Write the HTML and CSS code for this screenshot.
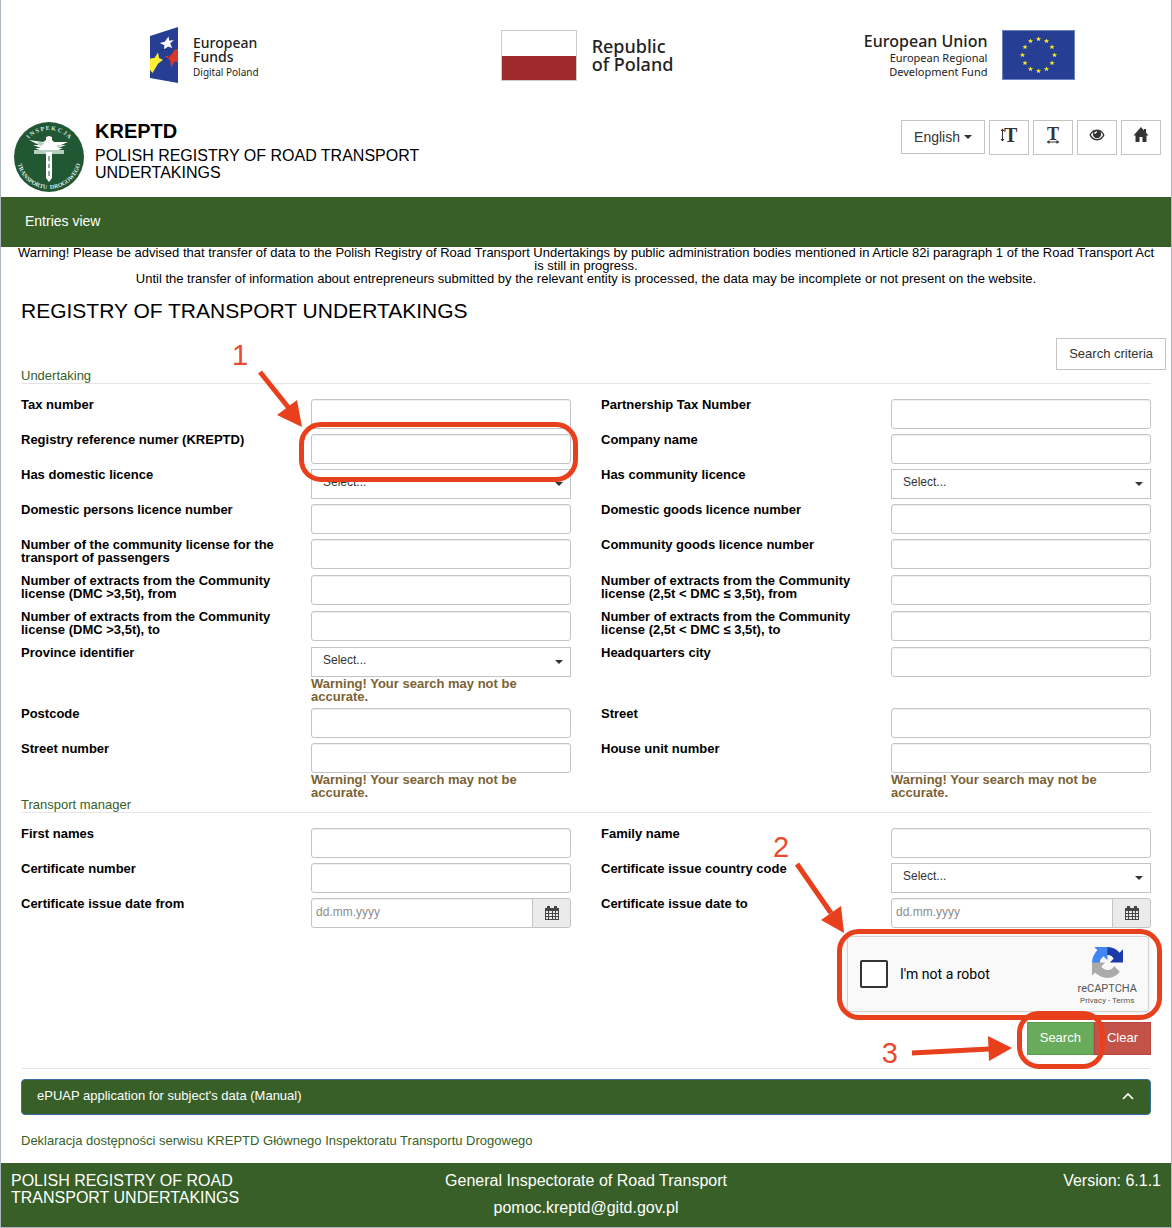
FILE: index.html
```html
<!DOCTYPE html>
<html lang="en">
<head>
<meta charset="utf-8">
<meta name="viewport" content="width=device-width, initial-scale=1">
<title>KREPTD</title>
<link rel="stylesheet" href="styles.css">
</head>
<body>
<div class="page">
  <div class="funding">
    <div class="fund">
      <svg width="28" height="56" viewBox="0 0 28 56" aria-hidden="true">
        <path fill="#263f95" d="M0 9 28 0V56L0 51Z"/>
        <path fill="#fff" d="M18.500 9.500l.8 4.200 4.500-.6-3.600 3.300 2 4.500-4.200-1.400-4 3.300.4-4.600-4.600-2.200 5-1.200z"/>
        <path fill="#fff033" d="M0 31.500l4.500-.5L8 25.500 9 31l4 1.700-5 4L2.500 46 0 43z"/>
        <path fill="#dc3729" d="M28 22v13l-3.500-.5L21.300 40.500 20 33l-5-3.500 6-1.500 4-5.500z"/>
        <path fill="none" stroke="#1c2f7a" d="M8 26c3-4 9-5 12-2M13 33c3 0 6-2 7-5"/>
      </svg>
      <div class="fund-text fund-low"><strong class="fund-md">European<br>Funds</strong><span class="fund-xs">Digital Poland</span></div>
    </div>
    <div class="fund">
      <div class="flag-pl"></div>
      <div class="fund-text"><strong class="fund-lg">Republic<br>of Poland</strong></div>
    </div>
    <div class="fund">
      <div class="fund-text fund-right"><strong class="fund-eu">European Union</strong><span class="fund-sm">European Regional<br>Development Fund</span></div>
      <svg width="73" height="50" viewBox="0 0 73 50" aria-hidden="true">
        <defs><path id="star" fill="#fbee23" d="M0-2.600.7-.8H2.600L1.100.4 1.600 2.200 0 1.100-1.600 2.200-1.100.4-2.600-.8H-.7Z"/></defs>
        <rect x=".5" y=".5" width="72" height="49" fill="#263f95" stroke="#6f83c0"/>
        <use href="#star" x="36.500" y="9"/><use href="#star" x="44.500" y="11"/><use href="#star" x="50" y="17"/>
        <use href="#star" x="52.500" y="25"/><use href="#star" x="50" y="33"/><use href="#star" x="44.500" y="39"/>
        <use href="#star" x="36.500" y="41"/><use href="#star" x="28.500" y="39"/><use href="#star" x="23" y="33"/>
        <use href="#star" x="20.500" y="25"/><use href="#star" x="23" y="17"/><use href="#star" x="28.500" y="11"/>
      </svg>
    </div>
  </div>

  <header class="header">
    <svg class="emblem" width="70" height="70" viewBox="0 0 70 70" aria-hidden="true">
      <defs><path id="arc-top" d="M8 35A27 27 0 0 1 62 35"/><path id="arc-bottom" d="M3 35A32 32 0 0 0 67 35"/></defs>
      <circle cx="35" cy="35" r="35" fill="#225733"/>
      <text class="seal"><textPath href="#arc-top" startOffset="50%" text-anchor="middle">I N S P E K C J A</textPath></text>
      <text class="seal"><textPath href="#arc-bottom" startOffset="50%" text-anchor="middle">TRANSPORTU&#160; DROGOWEGO</textPath></text>
      <path fill="#fff" d="M15 18l14 2 3-2V15l3-1 3 1v3l2 2 14 0-7 3h5l-8 3h5l-9 4H29l-8-4h6l-8-3h6z"/>
      <path fill="#b7cfbd" d="M20 28h30v4H20zM26 20l5 1-4 3-5-3zM43 23l7 0-7 2z"/>
      <path fill="#fff" d="M32 30h6v26l-3 4-3-4z"/>
      <path stroke="#225733" d="M35 34v5M35 42v4M35 49v5"/>
    </svg>
    <div class="brand">
      <div class="brand-name">KREPTD</div>
      <div class="brand-sub">POLISH REGISTRY OF ROAD TRANSPORT UNDERTAKINGS</div>
    </div>
    <div class="tools">
      <button class="btn lang" type="button">English <i class="caret"></i></button>
      <button class="btn tool" type="button" aria-label="Text height"><svg width="18" height="16" viewBox="0 0 18 16"><path stroke="#333" d="M2.500 2v12"/><path fill="#333" d="M.5 4 2.500 1.500 4.500 4zM.5 12l2 2.500 2-2.500z"/><text class="icon-t" x="4" y="15">T</text></svg></button>
      <button class="btn tool" type="button" aria-label="Text width"><svg width="16" height="16" viewBox="0 0 16 16"><text class="icon-t icon-t-s" x="2" y="13">T</text><path stroke="#333" d="M2 15h12"/><path fill="#333" d="M4.500 13 2 15l2.500 2zM11.500 13l2.500 2-2.500 2z"/></svg></button>
      <button class="btn tool" type="button" aria-label="Contrast"><svg width="16" height="16" viewBox="0 0 16 16"><path fill="#333" fill-rule="evenodd" d="M8 2.500C4 2.500 1.500 5.500.5 8c1 2.500 3.500 5.500 7.500 5.500s6.500-3 7.500-5.500C14.500 5.500 12 2.500 8 2.500zm0 9.500c-3 0-5-1.900-6-4 .6-1.500 1.300-2.300 2.300-3a4.200 4.200 0 1 0 7.400 0c1 .7 1.700 1.500 2.300 3-1 2.100-3 4-6 4zM8 4.300C6.300 4.300 5.400 5.400 5.300 7h1.200c0-1 .5-1.500 1.500-1.600z"/></svg></button>
      <button class="btn tool" type="button" aria-label="Home"><svg width="16" height="16" viewBox="0 0 16 16"><path fill="#333" d="M8 0 .500 8.500h2V15H6.500V10h3v5h4V8.500h2L13 5.700V2h-2v1.400z"/></svg></button>
    </div>
  </header>

  <nav class="nav"><a href="#">Entries view</a></nav>

  <main class="main">
    <p class="notice">Warning! Please be advised that transfer of data to the Polish Registry of Road Transport Undertakings by public administration bodies mentioned in Article 82i paragraph 1 of the Road Transport Act is still in progress.<br>Until the transfer of information about entrepreneurs submitted by the relevant entity is processed, the data may be incomplete or not present on the website.</p>
    <h1>REGISTRY OF TRANSPORT UNDERTAKINGS</h1>
    <div class="criteria"><button class="btn" type="button">Search criteria</button></div>

    <form>
      <h2 class="section">Undertaking</h2>
      <div class="row">
        <label for="tax">Tax number</label><div class="field"><input id="tax" type="text"></div>
        <label for="ptax">Partnership Tax Number</label><div class="field"><input id="ptax" type="text"></div>
      </div>
      <div class="row">
        <label for="ref">Registry reference numer (KREPTD)</label>
        <div class="field"><input id="ref" type="text">
          <div class="mark mark-1"><svg class="arrow" aria-hidden="true"><path class="shaft" d="M-51-62-19-22"/><path class="head" d="M-9-7-34-19-14-34z"/></svg><span class="num num-1">1</span></div>
        </div>
        <label for="company">Company name</label><div class="field"><input id="company" type="text"></div>
      </div>
      <div class="row">
        <label for="dom">Has domestic licence</label><div class="field select"><select id="dom"><option>Select...</option></select></div>
        <label for="com">Has community licence</label><div class="field select"><select id="com"><option>Select...</option></select></div>
      </div>
      <div class="row">
        <label for="dpl">Domestic persons licence number</label><div class="field"><input id="dpl" type="text"></div>
        <label for="dgl">Domestic goods licence number</label><div class="field"><input id="dgl" type="text"></div>
      </div>
      <div class="row">
        <label for="cpl">Number of the community license for the transport of passengers</label><div class="field"><input id="cpl" type="text"></div>
        <label for="cgl">Community goods licence number</label><div class="field"><input id="cgl" type="text"></div>
      </div>
      <div class="row">
        <label for="e1">Number of extracts from the Community license (DMC &gt;3,5t), from</label><div class="field"><input id="e1" type="text"></div>
        <label for="e2">Number of extracts from the Community license (2,5t &lt; DMC ≤ 3,5t), from</label><div class="field"><input id="e2" type="text"></div>
      </div>
      <div class="row">
        <label for="e3">Number of extracts from the Community license (DMC &gt;3,5t), to</label><div class="field"><input id="e3" type="text"></div>
        <label for="e4">Number of extracts from the Community license (2,5t &lt; DMC ≤ 3,5t), to</label><div class="field"><input id="e4" type="text"></div>
      </div>
      <div class="row">
        <label for="prov">Province identifier</label><div class="field select"><select id="prov"><option>Select...</option></select><p class="warn">Warning! Your search may not be accurate.</p></div>
        <label for="city">Headquarters city</label><div class="field"><input id="city" type="text"></div>
      </div>
      <div class="row">
        <label for="post">Postcode</label><div class="field"><input id="post" type="text"></div>
        <label for="street">Street</label><div class="field"><input id="street" type="text"></div>
      </div>
      <div class="row">
        <label for="sn">Street number</label><div class="field"><input id="sn" type="text"><p class="warn">Warning! Your search may not be accurate.</p></div>
        <label for="hn">House unit number</label><div class="field"><input id="hn" type="text"><p class="warn">Warning! Your search may not be accurate.</p></div>
      </div>

      <h2 class="section">Transport manager</h2>
      <div class="row">
        <label for="fn">First names</label><div class="field"><input id="fn" type="text"></div>
        <label for="ln">Family name</label><div class="field"><input id="ln" type="text"></div>
      </div>
      <div class="row">
        <label for="cn">Certificate number</label><div class="field"><input id="cn" type="text"></div>
        <label for="cc">Certificate issue country code</label><div class="field select"><select id="cc"><option>Select...</option></select></div>
      </div>
      <div class="row">
        <label for="df">Certificate issue date from</label>
        <div class="field date"><input id="df" type="text" placeholder="dd.mm.yyyy"><button type="button" aria-label="Pick date"><svg width="14" height="14" viewBox="0 0 14 14"><path fill="#444" fill-rule="evenodd" d="M0 2h2V0h3v2h4V0h3v2h2v12H0zM1 5v2h2V5zm3 0v2h3V5zm4 0v2h2V5zm3 0v2h2V5zM1 8v2h2V8zm3 0v2h3V8zm4 0v2h2V8zm3 0v2h2V8zM1 11v2h2v-2zm3 0v2h3v-2zm4 0v2h2v-2zm3 0v2h2v-2z"/></svg></button></div>
        <label for="dt">Certificate issue date to</label>
        <div class="field date"><input id="dt" type="text" placeholder="dd.mm.yyyy"><button type="button" aria-label="Pick date"><svg width="14" height="14" viewBox="0 0 14 14"><path fill="#444" fill-rule="evenodd" d="M0 2h2V0h3v2h4V0h3v2h2v12H0zM1 5v2h2V5zm3 0v2h3V5zm4 0v2h2V5zm3 0v2h2V5zM1 8v2h2V8zm3 0v2h3V8zm4 0v2h2V8zm3 0v2h2V8zM1 11v2h2v-2zm3 0v2h3v-2zm4 0v2h2v-2zm3 0v2h2v-2z"/></svg></button></div>
      </div>

      <div class="captcha">
        <input id="robot" type="checkbox"><label for="robot">I'm not a robot</label>
        <div class="captcha-brand">
          <svg width="31" height="31" viewBox="0 0 64 64" aria-hidden="true">
            <path fill="#1c3aa9" d="M64 31.955l-.013-1.370V4.687l-7.160 7.160C50.967 4.674 42.033.093 32.043.093c-10.397 0-19.634 4.960-25.477 12.640l11.736 11.860a15.550 15.550 0 0 1 4.754-5.334c2.050-1.600 4.952-2.906 8.968-2.906.485 0 .860.057 1.135.163 4.976.393 9.288 3.140 11.828 7.124l-8.307 8.307L64 31.953"/>
            <path fill="#4285f4" d="M31.862.094l-1.370.013H4.594l7.160 7.160C4.580 13.128 0 22.060 0 32.050c0 10.397 4.960 19.634 12.640 25.477L24.500 45.790a15.550 15.550 0 0 1-5.334-4.754c-1.600-2.050-2.906-4.952-2.906-8.968 0-.485.057-.860.163-1.135.393-4.976 3.140-9.288 7.124-11.828l8.307 8.307L31.860.095"/>
            <path fill="#ababab" d="M.001 32.045l.013 1.370v25.898l7.160-7.160c5.860 7.173 14.794 11.754 24.784 11.754 10.397 0 19.634-4.960 25.477-12.640L45.698 39.410a15.550 15.550 0 0 1-4.754 5.334c-2.050 1.600-4.952 2.906-8.968 2.906-.485 0-.860-.057-1.135-.163-4.976-.393-9.288-3.140-11.828-7.124l8.307-8.307L0 32.046"/>
          </svg>
          <span class="captcha-name">reCAPTCHA</span>
          <span class="captcha-links"><a href="#">Privacy</a> - <a href="#">Terms</a></span>
        </div>
        <div class="mark mark-2"><svg class="arrow" aria-hidden="true"><path class="shaft" d="M-51-73-17-24"/><path class="head" d="M-4-4-27-17-7-31z"/></svg><span class="num num-2">2</span></div>
      </div>

      <div class="actions">
        <div class="search-wrap"><button class="btn search" type="submit">Search</button>
          <div class="mark mark-3"><svg class="arrow" aria-hidden="true"><path class="shaft" d="M-115 31-38 27"/><path class="head" d="M-15 26-39 14-38 39z"/></svg><span class="num num-3">3</span></div>
        </div>
        <button class="btn clear" type="reset">Clear</button>
      </div>
    </form>

    <button class="panel" type="button"><span>ePUAP application for subject's data (Manual)</span><svg width="12" height="8" viewBox="0 0 12 8" aria-hidden="true"><path fill="none" stroke="#fff" stroke-width="1.600" d="M1 7l5-5 5 5"/></svg></button>
    <p class="declaration"><a href="#">Deklaracja dostępności serwisu KREPTD Głównego Inspektoratu Transportu Drogowego</a></p>
  </main>

  <footer class="footer">
    <div class="footer-name">POLISH REGISTRY OF ROAD TRANSPORT UNDERTAKINGS</div>
    <div class="footer-mid"><div>General Inspectorate of Road Transport</div><a href="#">pomoc.kreptd@gitd.gov.pl</a></div>
    <div class="footer-ver">Version: 6.1.1</div>
  </footer>
</div>
</body>
</html>
```
FILE: styles.css
```css
* { box-sizing: border-box; }
body {
  margin: 0;
  background: #fff;
  color: #000;
  font: 13px/13px "Liberation Sans", Arial, sans-serif;
}
.page { border: 1px solid #adb5bf; border-top: 0; }
button, input, select { font-family: inherit; margin: 0; }
h1, h2, p { margin: 0; font-weight: normal; }
a { color: inherit; text-decoration: none; }
svg { display: block; flex: none; overflow: visible; }

.funding {
  display: grid;
  grid-template-columns: repeat(3, 1fr);
  padding: 25px 10px 0 12px;
  height: 118px;
  align-items: start;
}
.fund {
  display: flex;
  justify-content: center;
  align-items: center;
  gap: 15px;
  height: 60px;
  color: #222;
  font-family: "Noto Sans", sans-serif;
  white-space: nowrap;
}
.fund-text { display: flex; flex-direction: column; }
.fund-text strong { font-weight: 500; }
.fund-right { text-align: right; }
.fund-low { padding-top: 5px; gap: 1px; }
.fund-md { font-size: 14px; line-height: 14px; }
.fund-lg { font-size: 18px; line-height: 18px; }
.fund-eu { font-size: 16px; line-height: 20px; }
.fund-xs { font-size: 10px; line-height: 14px; }
.fund-sm { font-size: 11px; line-height: 14px; }
.flag-pl {
  width: 76px;
  height: 51px;
  border: 1px solid #ccc;
  background: linear-gradient(#fff 50%, #9f2a2d 50%);
}

.header {
  display: flex;
  align-items: flex-start;
  padding: 2px 10px 0 13px;
  height: 79px;
}
.emblem { margin-top: 2px; }
.seal { fill: #dfe9e1; font: bold 6px "Liberation Serif", serif; }
.brand { width: 360px; margin-left: 11px; }
.brand-name { font-size: 20px; line-height: 22px; font-weight: bold; }
.brand-sub { font-size: 16px; line-height: 17px; padding-top: 5px; }
.tools { display: flex; gap: 4px; margin-left: auto; }
.btn {
  height: 34px;
  padding: 0 12px 1px;
  border: 1px solid #c4c4c4;
  background: #fff;
  color: #333;
  font-size: 13px;
  line-height: 16px;
}
.lang { display: flex; align-items: center; gap: 4px; font-size: 14px; }
.tool { width: 40px; height: 35px; padding: 0 0 5px; display: grid; place-items: center; }
.icon-t { font: bold 20px "Liberation Serif", serif; fill: #333; }
.icon-t-s { font-size: 18px; }
.caret { border: 4px solid transparent; border-top-color: currentColor; border-bottom: 0; }

.nav {
  height: 50px;
  padding: 0 24px 2px;
  display: flex;
  align-items: center;
  background: #375f27;
  color: #fff;
  font-size: 14px;
}

.main { padding: 0 20px; }
.notice { margin: -1px -6px 0; text-align: center; }
h1 { margin-top: 13px; font-size: 21px; line-height: 26px; }
.criteria { display: flex; justify-content: flex-end; margin: 14px -15px 0 0; }
.criteria .btn { height: 32px; }
.section {
  height: 15px;
  margin-top: -1px;
  margin-bottom: 14px;
  border-bottom: 1px solid #e5e5e5;
  color: #375f27;
  font-size: 13px;
}
.row {
  display: grid;
  grid-template-columns: repeat(4, 1fr);
  column-gap: 30px;
}
.row > label { padding-bottom: 10px; font-weight: bold; }
.field { position: relative; padding: 1px 0 4px; }
.field input, .field select {
  display: block;
  width: 100%;
  height: 30px;
  border: 1px solid #c4c4c4;
  border-radius: 3px;
  background: #fff;
  font-size: 12px;
}
.field input { padding: 0 4px 3px; box-shadow: inset 0 1px 1px #0001; }
.field select { appearance: none; border-radius: 0; padding: 0 11px 4px; color: #333; }
.select::after {
  content: "";
  position: absolute;
  top: 14px;
  right: 8px;
  border: 4px solid transparent;
  border-top-color: #333;
  border-bottom: 0;
}
.field input::placeholder { color: #8c8c8c; }
.warn { color: #7b6234; font-weight: bold; }
.row:has(.warn) + .section { margin-top: -5px; }
.date { display: flex; }
.date input { flex: 1; min-width: 0; border-radius: 3px 0 0 3px; }
.date button {
  width: 39px;
  height: 30px;
  margin-left: -1px;
  padding: 0;
  display: grid;
  place-items: center;
  border: 1px solid #c4c4c4;
  border-radius: 0 3px 3px 0;
  background: #ebebeb;
}

.captcha {
  position: relative;
  display: flex;
  align-items: center;
  width: 302px;
  height: 76px;
  margin: 4px 2px 0 auto;
  padding: 0 11px 0 12px;
  border: 1px solid #d3d3d3;
  border-radius: 3px;
  background: #f9f9f9;
  box-shadow: 0 0 4px 1px #00000014;
  font-family: Roboto, sans-serif;
}
.captcha input {
  appearance: none;
  width: 28px;
  height: 28px;
  border: 2px solid #333;
  border-radius: 2px;
  background: #fff;
}
.captcha label { margin-left: 12px; font-size: 14px; line-height: 18px; }
.captcha-brand {
  display: flex;
  flex-direction: column;
  align-items: center;
  margin-left: auto;
  padding-top: 5px;
  color: #555;
}
.captcha-name { margin-top: 4px; font-size: 11px; line-height: 14px; }
.captcha-links { font-size: 8px; line-height: 10px; }
.actions { display: flex; justify-content: flex-end; margin-top: 10px; }
.search-wrap { position: relative; }
.actions .btn { height: 33px; color: #fff; }
.actions .search { background: #68ab5b; border-color: #5c9f50; }
.actions .clear { background: #c35249; border-color: #b8463d; }

/* Numbered walkthrough marks, each tied to the control it points at */
.mark {
  --ink: #e8401c;
  position: absolute;
  z-index: 2;
  border: 5px solid var(--ink);
  border-radius: 22px;
  pointer-events: none;
}
.mark-1 { inset: -11px -7px -14px -12px; }
.mark-2 { inset: -8px -14px -9px -11px; }
.mark-3 { inset: -11px -11px -14px -10px; }
.arrow { position: absolute; top: 0; left: 0; width: 1px; height: 1px; overflow: visible; }
.mark-1 .arrow { top: 7px; left: 7px; }
.mark-2 .arrow { top: 3px; left: 6px; }
.mark-3 .arrow { top: 6px; left: 5px; }
.shaft { stroke: var(--ink); stroke-width: 5; }
.head { fill: var(--ink); }
.num { position: absolute; font: 29px/30px "Liberation Sans", Arial, sans-serif; color: #ea4a30; }
.num-1 { top: -87px; left: -72px; }
.num-2 { top: -102px; left: -69px; }
.num-3 { top: 22px; left: -140px; }

.panel {
  display: flex;
  align-items: center;
  justify-content: space-between;
  width: 100%;
  height: 36px;
  margin-top: 24px;
  padding: 0 16px 3px 15px;
  border: 1px solid #3a70a8;
  border-radius: 4px;
  background: #375f27;
  color: #fff;
  font-size: 13px;
  position: relative;
}
.panel::before {
  content: "";
  position: absolute;
  top: -12px;
  left: 0;
  right: 0;
  border-top: 1px solid #e5e5e5;
}
.declaration { padding: 19px 0 16px; color: #375f27; }

.footer {
  display: grid;
  grid-template-columns: 1fr 2fr 1fr;
  height: 64px;
  padding: 9px 10px 0;
  background: #375f27;
  color: #fff;
  font-size: 16px;
  line-height: 17px;
}
.footer-mid { text-align: center; }
.footer-mid a { display: block; margin-top: 10px; }
.footer-ver { text-align: right; }
```
